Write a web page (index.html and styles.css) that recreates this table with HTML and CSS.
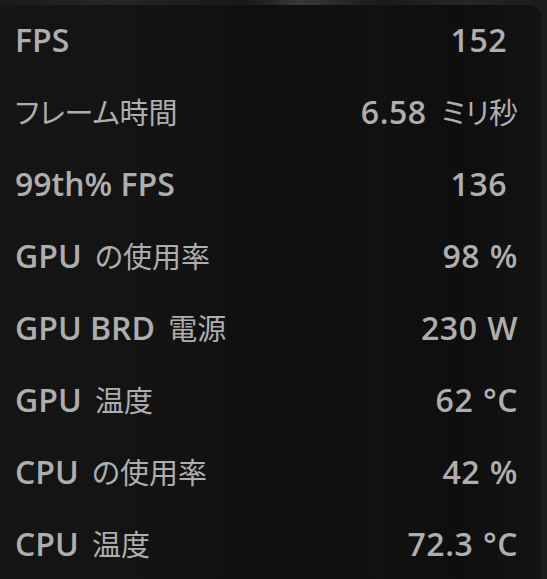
FILE: index.html
```html
<!DOCTYPE html>
<html lang="ja">
<head>
    <meta charset="UTF-8">
    <meta name="viewport" content="width=device-width, initial-scale=1.0">
    <title>パフォーマンス</title>
    <link rel="stylesheet" href="styles.css">
</head>
<body>
    <div class="overlay">
        <div class="stat">
            <span class="label">FPS</span>
            <span class="value bare">152</span>
        </div>
        <div class="stat">
            <span class="label"><span class="ja">フレーム時間</span></span>
            <span class="value">6.58 <span class="ja gap">ミリ秒</span></span>
        </div>
        <div class="stat">
            <span class="label">99th% FPS</span>
            <span class="value bare">136</span>
        </div>
        <div class="stat">
            <span class="label">GPU <span class="ja gap">の使用率</span></span>
            <span class="value">98 %</span>
        </div>
        <div class="stat">
            <span class="label">GPU BRD <span class="ja gap">電源</span></span>
            <span class="value">230 W</span>
        </div>
        <div class="stat">
            <span class="label">GPU <span class="ja gap">温度</span></span>
            <span class="value">62 °C</span>
        </div>
        <div class="stat">
            <span class="label">CPU <span class="ja gap">の使用率</span></span>
            <span class="value">42 %</span>
        </div>
        <div class="stat">
            <span class="label">CPU <span class="ja gap">温度</span></span>
            <span class="value">72.3 °C</span>
        </div>
    </div>
</body>
</html>
```

FILE: styles.css
```css
* {
    margin: 0;
    padding: 0;
    box-sizing: border-box;
}
body {
    font-family: 'Open Sans', 'Noto Sans CJK JP', sans-serif;
    background: linear-gradient(90deg, #1d1915 0%, #2a2520 20%, #1a1815 45%, #3a3834 55%, #1b1917 70%, #2b2621 85%, #1c1c1c 99%);
    min-height: 100vh;
    padding-top: 5px;
    overflow: hidden;
}
.overlay {
    width: 541px;
    height: 574px;
    background: linear-gradient(90deg, #151515 0%, #131313 30%, #0f0f0f 50%, #111111 70%, #0e0e0e 85%, #131313 100%);
    border-top-right-radius: 12px;
    padding: 0 23px 0 15px;
    color: #aeaeae;
}
.stat {
    display: flex;
    justify-content: space-between;
    align-items: center;
    height: 72px;
    padding-bottom: 4px;
    font-size: 32px;
    font-weight: 600;
    white-space: nowrap;
}
.value {
    word-spacing: 1px;
    letter-spacing: 0.5px;
}
.ja {
    font-family: 'Noto Sans CJK JP', sans-serif;
    font-size: 29px;
    font-weight: 400;
    letter-spacing: 0;
    font-feature-settings: "palt";
}
.ja.gap {
    margin-left: 5px;
}
.value.bare {
    margin-right: 11px;
}
```
